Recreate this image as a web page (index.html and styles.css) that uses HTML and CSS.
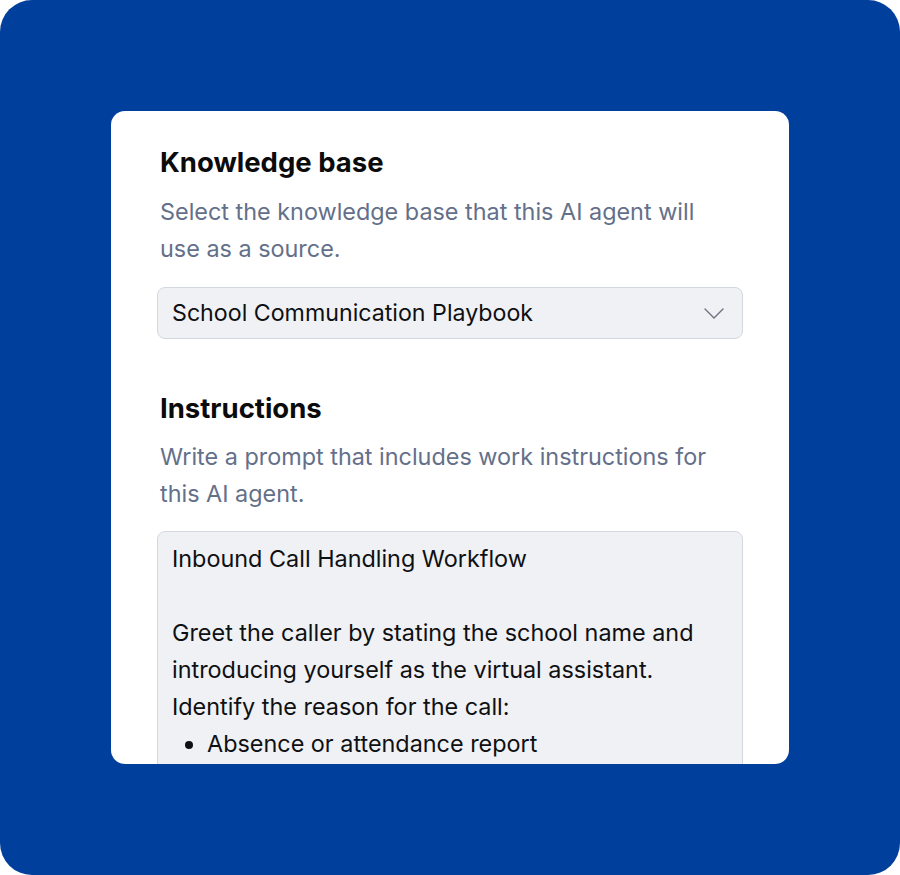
FILE: index.html
```html
<!DOCTYPE html>
<html lang="en">
<head>
<meta charset="utf-8">
<title>Knowledge base</title>
<link rel="stylesheet" href="styles.css">
</head>
<body>
<div class="frame">
  <div class="card">
    <section class="group">
      <h2 class="title">Knowledge base</h2>
      <p class="desc">Select the knowledge base that this AI agent will use as a source.</p>
      <div class="select">
        <span class="select-value">School Communication Playbook</span>
        <svg class="chevron" width="20" height="11" viewBox="0 0 20 11" fill="none"><path d="M1 1l9 9 9-9" stroke="#6b7280" stroke-width="1.4" stroke-linecap="round" stroke-linejoin="round"/></svg>
      </div>
    </section>
    <section class="group group-second">
      <h2 class="title">Instructions</h2>
      <p class="desc">Write a prompt that includes work instructions for this AI agent.</p>
      <div class="textarea">
        <p class="line">Inbound Call Handling Workflow</p>
        <p class="line blank">&nbsp;</p>
        <p class="line">Greet the caller by stating the school name and introducing yourself as the virtual assistant.</p>
        <p class="line">Identify the reason for the call:</p>
        <ul class="bullets">
          <li>Absence or attendance report</li>
        </ul>
      </div>
    </section>
  </div>
</div>
</body>
</html>
```

FILE: styles.css
```css
* { box-sizing: border-box; }
html, body { margin: 0; padding: 0; background: #ffffff; }
body {
  font-family: Inter, "Noto Sans", "Liberation Sans", sans-serif;
  width: 900px;
  height: 875px;
  overflow: hidden;
}
.frame {
  width: 900px;
  height: 875px;
  background: #013f9c;
  border-radius: 32px;
  padding: 111px;
}
.card {
  background: #ffffff;
  border-radius: 14px;
  height: 653px;
  overflow: hidden;
  padding: 35px 46px 0 46px;
}
.title {
  margin: 0 0 0 3px;
  font-size: 27.5px;
  line-height: 32px;
  font-weight: 700;
  color: #0b0b0c;
}
.desc {
  margin: 16px 0 0 3px;
  font-size: 23.4px;
  line-height: 36.5px;
  color: #64708a;
  max-width: 565px;
}
.select {
  margin-top: 20px;
  height: 52px;
  background: #eff1f5;
  border: 1px solid #d3d8e0;
  border-radius: 8px;
  display: flex;
  align-items: center;
  justify-content: space-between;
  padding: 0 18px 0 14px;
}
.select-value {
  font-size: 23.2px;
  color: #0f1012;
}
.chevron { display: block; }
.group-second { margin-top: 53px; }
.group-second .desc { margin-top: 15px; }
.textarea {
  margin-top: 19px;
  background: #eff1f5;
  border: 1px solid #d3d8e0;
  border-radius: 8px;
  padding: 8px 14px 20px 14px;
  font-size: 23.4px;
  line-height: 37px;
  color: #0f1012;
}
.line { margin: 0; }
.bullets {
  margin: 0;
  padding-left: 35px;
}
```
